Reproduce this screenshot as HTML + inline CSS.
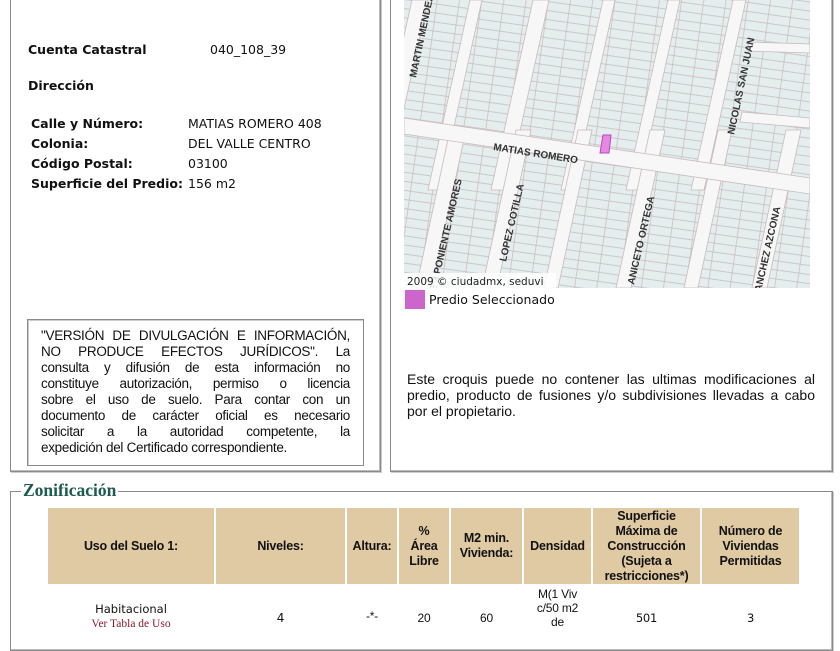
<!DOCTYPE html>
<html><head><meta charset="utf-8">
<style>
*{margin:0;padding:0;box-sizing:border-box}
body{width:840px;height:630px;overflow:hidden;background:#fff;position:relative;font-family:"DejaVu Sans","Liberation Sans",sans-serif;color:#111}
.a{position:absolute;white-space:nowrap}
.box{position:absolute;border:1px solid #8a8a8a;box-shadow:inset -1px -1px 0 #bbb, 1px 1px 0 #ccc}
.b{font-weight:bold;font-size:12.5px}
.v{font-size:12.5px}
.n{font-family:"Liberation Sans",sans-serif}
.ln{text-align:justify;text-align-last:justify;white-space:nowrap;height:16px}
.ll{text-align:left;text-align-last:left}
table{position:absolute;left:46px;top:508px;border-collapse:separate;border-spacing:2px 0;font-family:"Liberation Sans",sans-serif;font-size:12.5px;letter-spacing:-0.2px}
th{background:#dfcaa3;font-weight:bold;text-align:center;line-height:15px;height:76px;padding:0}
td{text-align:center;font-size:12px;line-height:14px;padding-top:10px;vertical-align:top}
</style></head><body>

<div class="box" style="left:10px;top:-5px;width:371px;height:477px"></div>
<div class="box" style="left:390px;top:-5px;width:443px;height:477px"></div>

<div class="a b" style="left:28px;top:42px">Cuenta Catastral</div>
<div class="a v" style="left:210px;top:42px">040_108_39</div>
<div class="a b" style="left:28px;top:78px">Dirección</div>
<div class="a b" style="left:31px;top:116px">Calle y Número:</div>
<div class="a v" style="left:188px;top:116px">MATIAS ROMERO 408</div>
<div class="a b" style="left:31px;top:136px">Colonia:</div>
<div class="a v" style="left:188px;top:136px">DEL VALLE CENTRO</div>
<div class="a b" style="left:31px;top:156px">Código Postal:</div>
<div class="a v" style="left:188px;top:156px">03100</div>
<div class="a b" style="left:31px;top:176px">Superficie del Predio:</div>
<div class="a v" style="left:188px;top:176px">156 m2</div>

<div class="box" style="left:27px;top:319px;width:337px;height:147px;box-shadow:inset 1px 1px 0 #ccc"></div>
<div class="a n" style="left:41px;top:328px;width:309px;white-space:normal;font-size:13.5px;line-height:16px;letter-spacing:-0.3px">
<div class="ln">"VERSIÓN DE DIVULGACIÓN E INFORMACIÓN,</div>
<div class="ln">NO PRODUCE EFECTOS JURÍDICOS". La</div>
<div class="ln">consulta y difusión de esta información no</div>
<div class="ln">constituye autorización, permiso o licencia</div>
<div class="ln">sobre el uso de suelo. Para contar con un</div>
<div class="ln">documento de carácter oficial es necesario</div>
<div class="ln">solicitar a la autoridad competente, la</div>
<div class="ln ll">expedición del Certificado correspondiente.</div>
</div>

<svg class="a" style="left:404px;top:0" width="406" height="288" viewBox="0 0 406 288">
<defs>
<pattern id="p" width="22" height="9" patternUnits="userSpaceOnUse" patternTransform="rotate(8)">
<rect width="22" height="9" fill="#e4eeee"/>
<path d="M0 8.5H22M11 0V9" stroke="#c9b9b9" stroke-width="0.7" fill="none"/>
</pattern>
</defs>
<rect width="406" height="288" fill="url(#p)"/>
<g fill="#f7f7f7" stroke="#c8baba" stroke-width="0.8">
<polygon points="8,0 24,0 -18,190 -34,190"/>
<polygon points="66,0 78,0 36,190 24,190"/>
<polygon points="129,0 145,0 103,190 87,190"/>
<polygon points="199,0 211,0 169,190 157,190"/>
<polygon points="264,0 276,0 234,190 222,190"/>
<polygon points="329,0 342,0 300,190 287,190"/>
<polygon points="46,130 62,130 28,288 12,288"/>
<polygon points="112,130 127,130 93,288 78,288"/>
<polygon points="174,130 188,130 154,288 140,288"/>
<polygon points="246,130 261,130 227,288 212,288"/>
<polygon points="314,130 328,130 294,288 280,288"/>
<polygon points="382,130 397,130 363,288 348,288"/>
<polygon points="345,42 406,44 406,53 343,51"/>
<polygon points="338,112 406,118 406,128 336,122"/>
<polygon points="0,118 406,178 406,194 0,134"/>
</g>
<polygon points="199,135 207,135 205,153 196,153" fill="#e48ae0" stroke="#c040c0" stroke-width="1"/>
<g font-family="Liberation Sans,sans-serif" font-size="10" font-weight="bold" fill="#333">
<text transform="translate(12,78) rotate(-78)">MARTIN MENDEZ</text>
<text transform="translate(330,135) rotate(-78)">NICOLAS SAN JUAN</text>
<text transform="translate(89,150) rotate(9)">MATIAS ROMERO</text>
<text transform="translate(32,292) rotate(-77)">E 3 PONIENTE AMORES</text>
<text transform="translate(102,262) rotate(-77)">LOPEZ COTILLA</text>
<text transform="translate(230,285) rotate(-77)">ANICETO ORTEGA</text>
<text transform="translate(357,292) rotate(-77)">ANCHEZ AZCONA</text>
</g>
<rect x="0" y="273" width="152" height="15" fill="#fff" opacity="0.85"/>
<text x="3" y="285" font-family="DejaVu Sans,sans-serif" font-size="10.5" fill="#222">2009 © ciudadmx, seduvi</text>
</svg>

<div class="a" style="left:405px;top:290px;width:20px;height:19px;background:#cc66cc"></div>
<div class="a v" style="left:429px;top:292px">Predio Seleccionado</div>

<div class="a n" style="left:407px;top:371px;width:408px;white-space:normal;text-align:justify;font-size:14px;line-height:16px">Este croquis puede no contener las ultimas modificaciones al predio, producto de fusiones y/o subdivisiones llevadas a cabo por el propietario.</div>

<div class="box" style="left:10px;top:491px;width:823px;height:160px"></div>
<div class="a" style="left:21px;top:480px;background:#fff;padding:0 2px;font-family:'Liberation Serif',serif;font-weight:bold;font-size:17.5px;color:#1d5a4f">Zonificación</div>

<table>
<tr>
<th style="width:166px">Uso del Suelo 1:</th>
<th style="width:129px">Niveles:</th>
<th style="width:50px">Altura:</th>
<th style="width:50px">%<br>Área<br>Libre</th>
<th style="width:71px">M2 min.<br>Vivienda:</th>
<th style="width:67px">Densidad</th>
<th style="width:107px">Superficie<br>Máxima de<br>Construcción<br>(Sujeta a<br>restricciones*)</th>
<th style="width:97px">Número de<br>Viviendas<br>Permitidas</th>
</tr>
<tr>
<td style="padding-top:18px;font-family:'DejaVu Sans',sans-serif;font-size:11.5px;letter-spacing:0">Habitacional<br><span style="font-family:'Liberation Serif',serif;color:#8b1a2a;font-size:11.5px">Ver Tabla de Uso</span></td>
<td style="padding-top:27px;font-family:'DejaVu Sans',sans-serif">4</td>
<td style="padding-top:25px">-*-</td>
<td style="padding-top:27px">20</td>
<td style="padding-top:27px">60</td>
<td style="padding-top:3px">M(1 Viv<br>c/50 m2<br>de</td>
<td style="padding-top:27px;font-family:'DejaVu Sans',sans-serif;font-size:11.5px">501</td>
<td style="padding-top:27px;font-family:'DejaVu Sans',sans-serif;font-size:11.5px">3</td>
</tr>
</table>
</body></html>
